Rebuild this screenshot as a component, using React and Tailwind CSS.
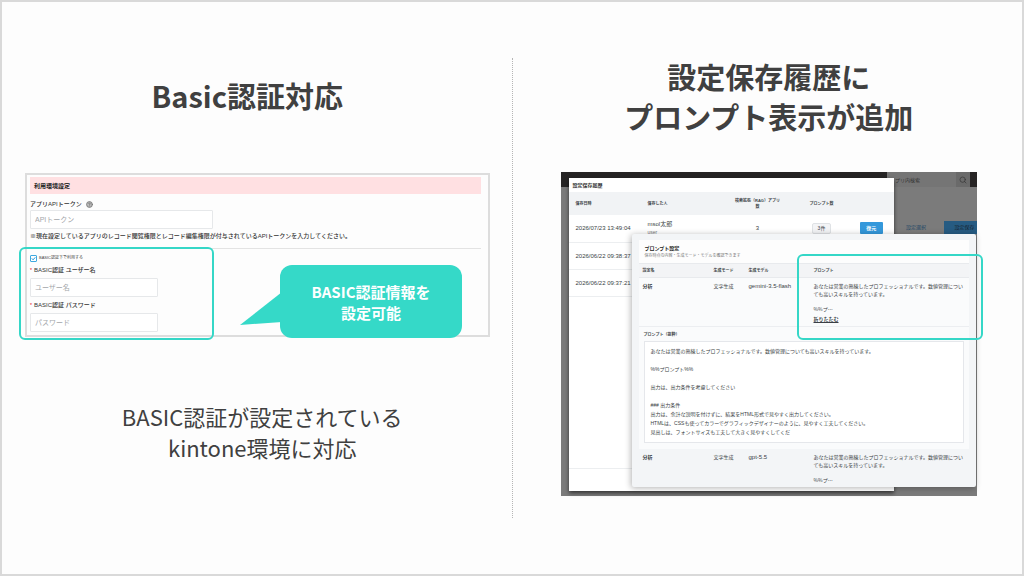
import React from 'react'
import { Search, CircleHelp } from "lucide-react"

const history = [
    { date: "2026/07/23 13:49:04", user: "msol太郎", role: "user", apps: 3, prompts: "3件" },
    { date: "2026/06/22 09:38:37" },
    { date: "2026/06/22 09:37:21" },
];

const excerpt = `あなたは営業の熟練したプロフェッショナルです。数値管理についても高いスキルを持っています。

%%プロンプト%%

出力は、出力条件を考慮してください

### 出力条件
出力は、余計な説明を付けずに、結果をHTML形式で見やすく出力してください。
HTMLは、CSSも使ってカラーでグラフィックデザイナーのように、見やすく工夫してください。
見出しは、フォントサイズも工夫して大きく見やすくしてくだ`;

function TextField({ id, label, required, placeholder, className }) {
    return (
        <div>
            <label htmlFor={id} className="flex h-4 items-center text-[6px] font-medium leading-none text-[#333]">
                {required && <span className="w-1 text-[5px] text-red-600">*</span>}
                {label}
            </label>
            <input
                id={id}
                type="text"
                placeholder={placeholder}
                className={`block h-[19px] rounded-[1px] border border-[#e6e8ea] bg-white px-1 text-[7px] leading-none placeholder:text-[#a3a6aa] ${className}`}
            />
        </div>
    );
}

function SettingsForm() {
    return (
        <div className="relative">
            <form className="border-2 border-[#dddddd] bg-[#fdfdfd] pt-[2px] pr-[7px] pb-[3px] pl-[3px] font-['Liberation_Sans','Noto_Sans_CJK_JP',sans-serif]">
                <h3 className="flex h-[17px] items-center bg-[#ffe0e2] px-1 text-[6px] font-bold leading-none text-[#222]">
                    利用環境設定
                </h3>
                <TextField
                    id="token"
                    label={<span className="flex h-full items-center gap-1 pt-1">アプリAPIトークン <CircleHelp className="h-[7px] w-[7px] fill-[#bbb] text-[#777]" strokeWidth={3} /></span>}
                    placeholder="APIトークン"
                    className="w-[183px]"
                />
                <p className="border-b border-[#e3e3e3] pt-1 pb-2 text-[6px] leading-[7px] font-medium text-[#333]">
                    ※現在設定しているアプリのレコード閲覧権限とレコード編集権限が付与されているAPIトークンを入力してください。
                </p>
                <label className="mt-[5px] flex h-2 items-center gap-[2px] text-[4px] leading-none text-[#444]">
                    <span className="relative h-[7px] w-[7px]">
                        <input type="checkbox" defaultChecked className="block h-[7px] w-[7px] appearance-none rounded-[1px] border border-[#3fa9e0] bg-white" />
                        <svg viewBox="0 0 7 7" className="pointer-events-none absolute inset-0 h-[7px] w-[7px]">
                            <path d="M1.8 3.4 L3.1 4.8 L5.3 2.3" fill="none" stroke="#2196d8" strokeWidth="1" />
                        </svg>
                    </span>
                    BASIC認証下で利用する
                </label>
                <TextField id="user" label="BASIC認証 ユーザー名" required placeholder="ユーザー名" className="w-32" />
                <TextField id="password" label="BASIC認証 パスワード" required placeholder="パスワード" className="w-32" />
            </form>

            <div className="absolute top-[74px] -left-[6px] h-[93px] w-[195px] rounded-md border-2 border-[#35d7c7]"></div>
            <svg viewBox="0 0 42 34" className="absolute top-[119px] left-[215px] h-[34px] w-[42px]">
                <path d="M0 33 L42 0 V30 Z" fill="#35d9c8" />
            </svg>
            <div className="absolute top-[92px] left-[255px] flex h-[73px] w-[182px] items-center justify-center rounded-xl bg-[#35d9c8] text-center text-[15px] leading-[21px] font-bold text-white">
                <p>BASIC認証情報を<br />設定可能</p>
            </div>
        </div>
    );
}

function HistoryDialog() {
    return (
        <div className="absolute top-[6px] right-[83px] bottom-[5px] left-2 bg-white shadow-[0_2px_4px_rgba(0,0,0,0.6)]">
            <h3 className="flex h-[14px] items-center px-1 text-[5px] font-bold leading-none text-[#333]">設定保存履歴</h3>
            <table className="w-full table-fixed text-left text-[#3a3f45]">
                <thead className="bg-[#f1f3f5] text-[4px] leading-[6px]">
                    <tr className="h-[23px]">
                        <th className="w-[72px] pl-[7px]">保存日時</th>
                        <th className="w-20 pl-[7px]">保存した人</th>
                        <th className="w-[74px] text-center">検索拡張（RAG）アプリ<br />数</th>
                        <th className="w-[54px] text-center">プロンプト数</th>
                        <th></th>
                    </tr>
                </thead>
                <tbody className="text-[6px] leading-none">
                    {history.map((row) => (
                        <tr key={row.date} className="h-[27px] border-b border-[#eceef0]">
                            <td className="pl-[7px] whitespace-nowrap">{row.date}</td>
                            <td className="pl-[7px] leading-[8px]">
                                {row.user}
                                {row.role && <span className="block text-[5px] text-[#777]">{row.role}</span>}
                            </td>
                            <td className="text-center">{row.apps}</td>
                            <td className="text-center">
                                {row.prompts && (
                                    <button className="h-[11px] w-[19px] rounded-[2px] border border-[#dfe2e5] bg-[#f3f4f6] text-[5px] leading-none">{row.prompts}</button>
                                )}
                            </td>
                            <td className="text-center">
                                {row.prompts && (
                                    <button className="h-3 w-[23px] rounded-[1px] bg-[#3498db] text-[5px] leading-none font-bold text-white">復元</button>
                                )}
                            </td>
                        </tr>
                    ))}
                </tbody>
            </table>
            <div className="absolute inset-x-0 bottom-[22px] border-b border-[#eceef0]"></div>
        </div>
    );
}

function PromptText() {
    return (
        <>
            あなたは営業の熟練したプロフェッショナルです。数値管理についても高いスキルを持っています。
            <span className="mt-[7px] block font-['Noto_Sans_CJK_JP',sans-serif]">%%プ…</span>
        </>
    );
}

function PromptDialog() {
    return (
        <div className="absolute top-[62px] right-px bottom-[9px] left-[71px] overflow-hidden rounded-[2px] bg-[#f3f5f7] px-[7px] pt-[6px] shadow-[-1px_1px_6px_rgba(0,0,0,0.3)]">
            <div className="h-[23px] bg-[#fdfdfd] px-[6px] pt-[5px]">
                <h3 className="text-[5px] leading-[7px] font-bold text-[#222]">プロンプト設定</h3>
                <p className="text-[4px] leading-[7px] text-[#777]">保存時点の内容・生成モード・モデルを確認できます</p>
            </div>
            <table className="w-full table-fixed text-left text-[5px] leading-[8px] text-[#3a3f45]">
                <thead className="border-y border-[#e8eaed] bg-[#f3f4f6] text-[4px] leading-none">
                    <tr className="h-[14px]">
                        <th className="w-[71px] pl-1">設定名</th>
                        <th className="w-[35px] pl-1">生成モード</th>
                        <th className="w-[65px] pl-1">生成モデル</th>
                        <th className="pl-1">プロンプト</th>
                    </tr>
                </thead>
                <tbody className="align-top">
                    <tr className="h-[49px] border-b border-[#eceef1] bg-[#fafbfc]">
                        <td className="pt-1 pl-1 font-bold">分析</td>
                        <td className="pt-1 pl-1">文字生成</td>
                        <td className="pt-1 pl-1 text-[6px] whitespace-nowrap">gemini-3.5-flash</td>
                        <td className="pt-1 pr-1 pl-1">
                            <PromptText />
                            <button className="mt-[2px] block leading-[8px] font-bold underline">折りたたむ</button>
                        </td>
                    </tr>
                    <tr className="bg-[#fafbfc]">
                        <td colSpan={4} className="px-[5px] pt-1 pb-[6px]">
                            <h4 className="mb-[2px] text-[4px] leading-[8px] font-bold">プロンプト（抜粋）</h4>
                            <pre className="border border-[#e5e7eb] bg-white px-[6px] py-[5px] font-['Liberation_Sans','Noto_Sans_CJK_JP',sans-serif] text-[5px] leading-[9px] whitespace-pre-wrap">{excerpt}</pre>
                        </td>
                    </tr>
                    <tr>
                        <td className="pt-1 pl-1 font-bold">分析</td>
                        <td className="pt-1 pl-1">文字生成</td>
                        <td className="pt-1 pl-1 text-[6px]">gpt-5.5</td>
                        <td className="pt-1 pr-1 pl-1"><PromptText /></td>
                    </tr>
                </tbody>
            </table>
        </div>
    );
}

function HistoryScreen() {
    return (
        <div className="relative h-[324px] bg-[#7b7b7b] font-['Liberation_Sans','Noto_Sans_CJK_JP',sans-serif]">
            <div className="flex h-[15px] justify-end bg-[#262424] pr-[7px]">
                <label className="flex w-[83px] items-center bg-[#757575]">
                    <input type="text" placeholder="プリ内検索" className="h-full min-w-0 flex-1 pl-2 text-[5px] placeholder:text-[#333]" />
                    <span className="flex h-full w-[14px] items-center justify-center bg-[#6a6a6a]">
                        <Search className="h-2 w-2 text-[#333]" strokeWidth={2} />
                    </span>
                </label>
            </div>
            <div className="mt-[34px] flex items-center justify-end gap-[18px] text-[5px] leading-none">
                <a href="#" className="text-[#1d4766]">設定選択</a>
                <button className="h-[13px] w-[33px] bg-[#265b82] pl-2 text-[#16222c]">設定保存</button>
            </div>
            <HistoryDialog />
            <PromptDialog />
            <div className="absolute top-[82px] -right-[6px] h-[86px] w-[186px] rounded-md border-2 border-[#35d7c7]"></div>
        </div>
    );
}

export default function App() {
    return (
        <div className="grid min-h-screen grid-cols-[minmax(0,1fr)_1px_minmax(0,1fr)] border-2 border-[#d9d9d9] bg-[#fdfdfd] font-['Noto_Sans_CJK_JP',sans-serif] text-[#404040]">
            <section className="pr-[22px] pb-14 pl-[23px]">
                <h2 className="mt-[73px] pr-5 text-center text-[29px] leading-10 font-bold">Basic認証対応</h2>
                <div className="mt-[58px]">
                    <SettingsForm />
                </div>
                <p className="mt-16 pl-[10px] text-center text-[22px] leading-[31px]">
                    BASIC認証が設定されている<br />kintone環境に対応
                </p>
            </section>
            <div className="my-14 border-l border-dotted border-[#b5b5b5]"></div>
            <section className="pr-[45px] pb-14 pl-12">
                <h2 className="mt-[54px] text-center text-[29px] leading-10 font-bold">設定保存履歴に<br />プロンプト表示が追加</h2>
                <div className="mt-9">
                    <HistoryScreen />
                </div>
            </section>
        </div>
    );
}
